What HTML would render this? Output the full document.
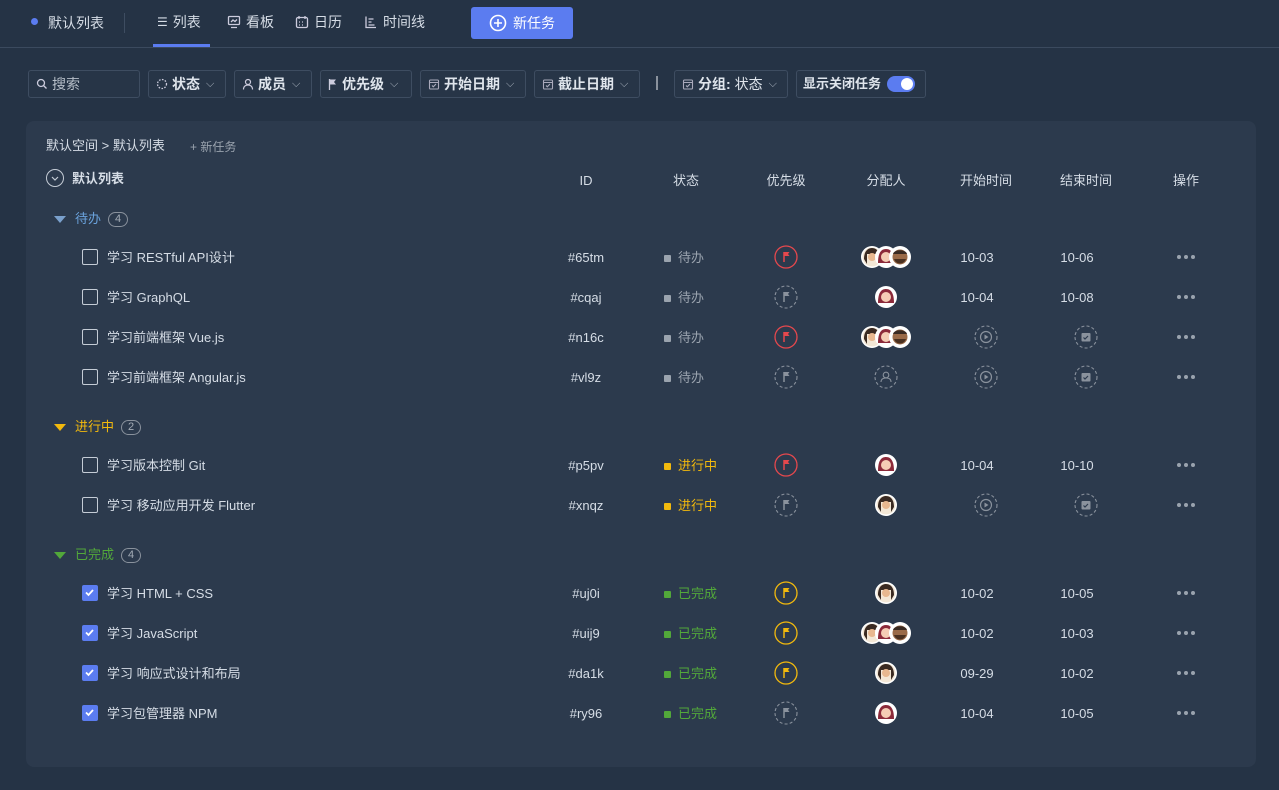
<!DOCTYPE html>
<html><head><meta charset="utf-8"><style>
*{box-sizing:border-box;margin:0;padding:0}
body{width:1279px;height:790px;background:#253345;font-family:"Liberation Sans","Noto Sans CJK SC",sans-serif;color:#d6dde6;font-size:13px;position:relative;overflow:hidden;line-height:20px}
.a{position:absolute}
.hdr{position:absolute;left:0;top:0;width:1279px;height:48px;border-bottom:1px solid #3b4a5e}
.tab{position:absolute;top:12px;font-size:14px;color:#d6dde6;display:flex;align-items:center;gap:5px}
.btn{position:absolute;left:471px;top:7px;width:102px;height:32px;background:#5b7cf0;border-radius:3px;color:#fff;font-size:14px;display:flex;align-items:center;justify-content:center;gap:6px}
.f{position:absolute;top:70px;height:28px;border:1px solid #3e4d61;border-radius:3px;display:flex;align-items:center;padding:0 7px;font-size:14px;font-weight:bold;color:#dfe5ec;gap:4px;background:#273547;white-space:nowrap}
.f .c{font-weight:normal;color:#aab3bf;font-size:11px;margin-left:2px}
.panel{position:absolute;left:26px;top:121px;width:1230px;height:646px;background:#2c3a4d;border-radius:8px}
.cb{position:absolute;left:82px;width:16px;height:16px;border:1.5px solid #c5ccd6;border-radius:2px}
.cb.on{background:#5b7cf0;border-color:#5b7cf0}
.t{position:absolute;left:107px;font-size:13px;color:#d6dde6}
.id{position:absolute;left:546px;width:80px;text-align:center;color:#d6dde6}
.st{position:absolute;left:664px;display:flex;align-items:center;gap:7px}
.st i{width:7px;height:7px;border-radius:1px;display:inline-block}
.dt{position:absolute;width:60px;text-align:center;color:#d6dde6}
.dots{position:absolute;left:1177px;display:flex;gap:3px}
.dots i{width:4px;height:4px;border-radius:50%;background:#9aa3ae;display:block}
.grp{position:absolute;left:54px;display:flex;align-items:center;gap:7px;font-size:13px}
.tri{width:0;height:0;border-left:6px solid transparent;border-right:6px solid transparent;border-top:7px solid currentColor;margin-right:2px}
.num{border:1px solid #8a929d;border-radius:9px;width:20px;height:15px;text-align:center;font-size:11px;color:#a4acb6;line-height:13px}
.th{position:absolute;top:171px;font-size:13px;color:#d6dde6;width:80px;text-align:center}
</style></head><body>
<div class="hdr">
<div class="a" style="left:31px;top:18px;width:7px;height:7px;border-radius:50%;background:#5b7cf0"></div>
<div class="a" style="left:48px;top:13px;font-size:14px">默认列表</div>
<div class="a" style="left:124px;top:13px;width:1px;height:20px;background:#3e4d61"></div>
<div class="tab" style="left:157px"><span style="font-size:12px">☰</span>列表</div>
<div class="a" style="left:153px;top:44px;width:57px;height:3px;background:#5b7cf0"></div>
<div class="tab" style="left:227px"><svg width="14" height="14" viewBox="0 0 14 14" fill="none" stroke="#ccd" stroke-width="1.3"><rect x="1.5" y="1.5" width="11" height="8" rx="1"/><path d="M4 12.5h6M4 7l2-2 2 1.5 2-2"/></svg>看板</div>
<div class="tab" style="left:295px"><svg width="14" height="14" viewBox="0 0 14 14" fill="none" stroke="#ccd" stroke-width="1.3"><rect x="1.5" y="2.5" width="11" height="10" rx="1.5"/><path d="M4 1v3M10 1v3M4 7h1M7 7h1M10 7h0M4 10h1M7 10h1M10 10h0"/></svg>日历</div>
<div class="tab" style="left:364px"><svg width="14" height="14" viewBox="0 0 14 14" fill="none" stroke="#ccd" stroke-width="1.3"><path d="M2 1.5v11h10M4.5 4h5M4.5 7h3M4.5 10h6"/></svg>时间线</div>
<div class="btn"><svg width="18" height="18" viewBox="0 0 18 18" fill="none" stroke="#fff" stroke-width="1.6"><circle cx="9" cy="9" r="7.5"/><path d="M9 5v8M5 9h8"/></svg>新任务</div>
</div>

<div class="f" style="left:28px;width:112px;font-weight:normal;color:#b6bec8"><svg width="12" height="12" viewBox="0 0 12 12" fill="none" stroke="#ccd" stroke-width="1.3"><circle cx="5" cy="5" r="3.5"/><path d="M7.5 7.5l3 3"/></svg>搜索</div>
<div class="f" style="left:148px;width:78px"><svg width="12" height="12" viewBox="0 0 12 12" fill="none" stroke="#ccd" stroke-width="1.3" stroke-dasharray="1.6 1.4"><circle cx="6" cy="6" r="4.5"/></svg>状态<span class="c">⌵</span></div>
<div class="f" style="left:234px;width:78px"><svg width="12" height="12" viewBox="0 0 12 12" fill="none" stroke="#ccd" stroke-width="1.2"><circle cx="6" cy="4" r="2.5"/><path d="M1.5 11.5c0-3 2-4.5 4.5-4.5s4.5 1.5 4.5 4.5"/></svg>成员<span class="c">⌵</span></div>
<div class="f" style="left:320px;width:92px"><svg width="10" height="12" viewBox="0 0 10 12"><path d="M1.5 1v11" stroke="#ccd" stroke-width="1.3"/><path d="M2 1.5h6l-2 2.5 2 2.5H2z" fill="#ccd"/></svg>优先级<span class="c">⌵</span></div>
<div class="f" style="left:420px;width:106px"><svg width="12" height="12" viewBox="0 0 12 12" fill="none" stroke="#aab" stroke-width="1.1"><rect x="1.5" y="2" width="9" height="9" rx="1"/><path d="M1.5 4.5h9M4 7.5l1.3 1.3L8 6"/></svg>开始日期<span class="c">⌵</span></div>
<div class="f" style="left:534px;width:106px"><svg width="12" height="12" viewBox="0 0 12 12" fill="none" stroke="#aab" stroke-width="1.1"><rect x="1.5" y="2" width="9" height="9" rx="1"/><path d="M1.5 4.5h9M4 7.5l1.3 1.3L8 6"/></svg>截止日期<span class="c">⌵</span></div>
<div class="a" style="left:656px;top:76px;width:2px;height:14px;background:#8a929d"></div>
<div class="f" style="left:674px;width:114px"><svg width="12" height="12" viewBox="0 0 12 12" fill="none" stroke="#aab" stroke-width="1.1"><rect x="1.5" y="2" width="9" height="9" rx="1"/><path d="M1.5 4.5h9M4 7.5l1.3 1.3L8 6"/></svg>分组:<span style="font-weight:normal">状态</span><span class="c">⌵</span></div>
<div class="f" style="left:796px;width:130px;gap:2px;padding:0 6px;font-size:13px">显示关闭任务<span style="margin-left:4px;width:28px;height:16px;border-radius:8px;background:#5b7cf0;position:relative;display:inline-block;flex:none"><span style="position:absolute;right:2px;top:2px;width:12px;height:12px;border-radius:50%;background:#fff"></span></span></div>

<div class="panel"></div>
<div class="a" style="left:46px;top:136px;font-size:13px">默认空间 &gt; 默认列表</div>
<div class="a" style="left:190px;top:137px;font-size:12px;color:#9aa3ae">+ 新任务</div>
<div class="a" style="left:46px;top:169px;width:18px;height:18px;border:1.3px solid #c5ccd6;border-radius:50%"><svg width="16" height="16" viewBox="0 0 16 16" style="position:absolute;left:0;top:0" fill="none" stroke="#c5ccd6" stroke-width="1.2"><path d="M5 7l3 3 3-3"/></svg></div>
<div class="a" style="left:72px;top:169px;font-weight:bold;font-size:13px">默认列表</div>
<div class="th" style="left:546px">ID</div>
<div class="th" style="left:646px">状态</div>
<div class="th" style="left:746px">优先级</div>
<div class="th" style="left:846px">分配人</div>
<div class="th" style="left:946px">开始时间</div>
<div class="th" style="left:1046px">结束时间</div>
<div class="th" style="left:1146px">操作</div>

<svg width="0" height="0" style="position:absolute">
<defs>
<g id="fr"><circle cx="12" cy="12" r="11" fill="none" stroke="#e5484d" stroke-width="1.3"/><path d="M10 7v10" stroke="#e5484d" stroke-width="1.5"/><path d="M10.5 7h5l-1.5 2 1.5 2h-5z" fill="#e5484d"/></g>
<g id="fy"><circle cx="12" cy="12" r="11" fill="none" stroke="#f2b90d" stroke-width="1.3"/><path d="M10 7v10" stroke="#f2b90d" stroke-width="1.5"/><path d="M10.5 7h5l-1.5 2 1.5 2h-5z" fill="#f2b90d"/></g>
<g id="fg"><circle cx="12" cy="12" r="11" fill="none" stroke="#8a929d" stroke-width="1.1" stroke-dasharray="3 2.2"/><path d="M10 7v10" stroke="#8a929d" stroke-width="1.5"/><path d="M10.5 7h5l-1.5 2 1.5 2h-5z" fill="#8a929d"/></g>
<g id="pl"><circle cx="12" cy="12" r="11" fill="none" stroke="#8a929d" stroke-width="1.1" stroke-dasharray="3 2.2"/><circle cx="12" cy="12" r="5.5" fill="none" stroke="#8a929d" stroke-width="1.2"/><path d="M10.5 9.5v5l4-2.5z" fill="#8a929d"/></g>
<g id="ca"><circle cx="12" cy="12" r="11" fill="none" stroke="#8a929d" stroke-width="1.1" stroke-dasharray="3 2.2"/><rect x="7.5" y="8" width="9" height="8.5" rx="1" fill="#8a929d"/><path d="M9.5 12.5l1.5 1.5 3-3" stroke="#2c3a4d" stroke-width="1.2" fill="none"/></g>
<g id="us"><circle cx="12" cy="12" r="11" fill="none" stroke="#8a929d" stroke-width="1.1" stroke-dasharray="3 2.2"/><circle cx="12" cy="10" r="2.8" fill="none" stroke="#8a929d" stroke-width="1.1"/><path d="M7 17c0-3 2.2-4 5-4s5 1 5 4" fill="none" stroke="#8a929d" stroke-width="1.1"/></g>
<g id="a1"><circle cx="12" cy="12" r="11" fill="#fff"/><circle cx="12" cy="12" r="9.5" fill="#f3e7d6"/><path d="M4 14c0-8 4-11 8-11s8 3 8 11l-3 5V9H7v10z" fill="#3a2a22"/><circle cx="12" cy="12" r="4" fill="#e8b890"/></g>
<g id="a2"><circle cx="12" cy="12" r="11" fill="#fff"/><path d="M4 18c0-10 3-14 8-14s8 4 8 14z" fill="#8c2a3a"/><circle cx="12" cy="12" r="5" fill="#f5cdb5"/></g>
<g id="a3"><circle cx="12" cy="12" r="11" fill="#fff"/><circle cx="12" cy="12" r="9.5" fill="#fff"/><circle cx="12" cy="12" r="7.5" fill="#9a6a48"/><path d="M5 9c1-5 13-5 14 0z" fill="#3a2a22"/><path d="M6 14c2 6 10 6 12 0z" fill="#4a3020"/></g>
</defs></svg>

<div class="grp" style="top:209px;color:#6aa2dc"><span class="tri" style="color:#7aa0cc"></span>待办<span class="num">4</span></div>
<div class="grp" style="top:417px;color:#f2b90d"><span class="tri"></span>进行中<span class="num">2</span></div>
<div class="grp" style="top:545px;color:#52a83a"><span class="tri"></span>已完成<span class="num">4</span></div>

<div id="rows"></div>
<script>
const R=[
[257,0,'学习 RESTful API设计','#65tm',0,'fr','A','10-03','10-06'],
[297,0,'学习 GraphQL','#cqaj',0,'fg','2','10-04','10-08'],
[337,0,'学习前端框架 Vue.js','#n16c',0,'fr','A','',''],
[377,0,'学习前端框架 Angular.js','#vl9z',0,'fg','U','',''],
[465,0,'学习版本控制 Git','#p5pv',1,'fr','2','10-04','10-10'],
[505,0,'学习 移动应用开发 Flutter','#xnqz',1,'fg','1','',''],
[593,1,'学习 HTML + CSS','#uj0i',2,'fy','1','10-02','10-05'],
[633,1,'学习 JavaScript','#uij9',2,'fy','A','10-02','10-03'],
[673,1,'学习 响应式设计和布局','#da1k',2,'fy','1','09-29','10-02'],
[713,1,'学习包管理器 NPM','#ry96',2,'fg','2','10-04','10-05']];
const S=[['待办','#9aa3ae','#9aa3ae'],['进行中','#f2b90d','#f2b90d'],['已完成','#52a83a','#52a83a']];
let h='';
const ic=(id,x,y)=>`<svg class="a" style="left:${x-12}px;top:${y-12}px" width="24" height="24"><use href="#${id}"/></svg>`;
for(const r of R){const y=r[0];const ty=y-9;
h+=`<div class="cb ${r[1]?'on':''}" style="top:${y-8}px">${r[1]?'<svg width="13" height="13" viewBox="0 0 13 13" style="position:absolute;left:0;top:0"><path d="M3 6.5l2.5 2.5 4.5-5" stroke="#fff" stroke-width="1.8" fill="none"/></svg>':''}</div>`;
h+=`<div class="t" style="top:${ty}px">${r[2]}</div><div class="id" style="top:${ty}px">${r[3]}</div>`;
const s=S[r[4]];h+=`<div class="st" style="top:${ty}px;color:${s[1]}"><i style="background:${s[2]}"></i>${s[0]}</div>`;
h+=ic(r[5],786,y);
if(r[6]=='A'){h+=ic('a1',872,y)+ic('a2',886,y)+ic('a3',900,y);}
else if(r[6]=='U')h+=ic('us',886,y);else h+=ic(r[6]=='1'?'a1':'a2',886,y);
if(r[7]){h+=`<div class="dt" style="left:947px;top:${ty}px">${r[7]}</div><div class="dt" style="left:1047px;top:${ty}px">${r[8]}</div>`;}
else{h+=ic('pl',986,y)+ic('ca',1086,y);}
h+=`<div class="dots" style="top:${y-2}px"><i></i><i></i><i></i></div>`;}
document.getElementById('rows').innerHTML=h;
</script>
</body></html>
